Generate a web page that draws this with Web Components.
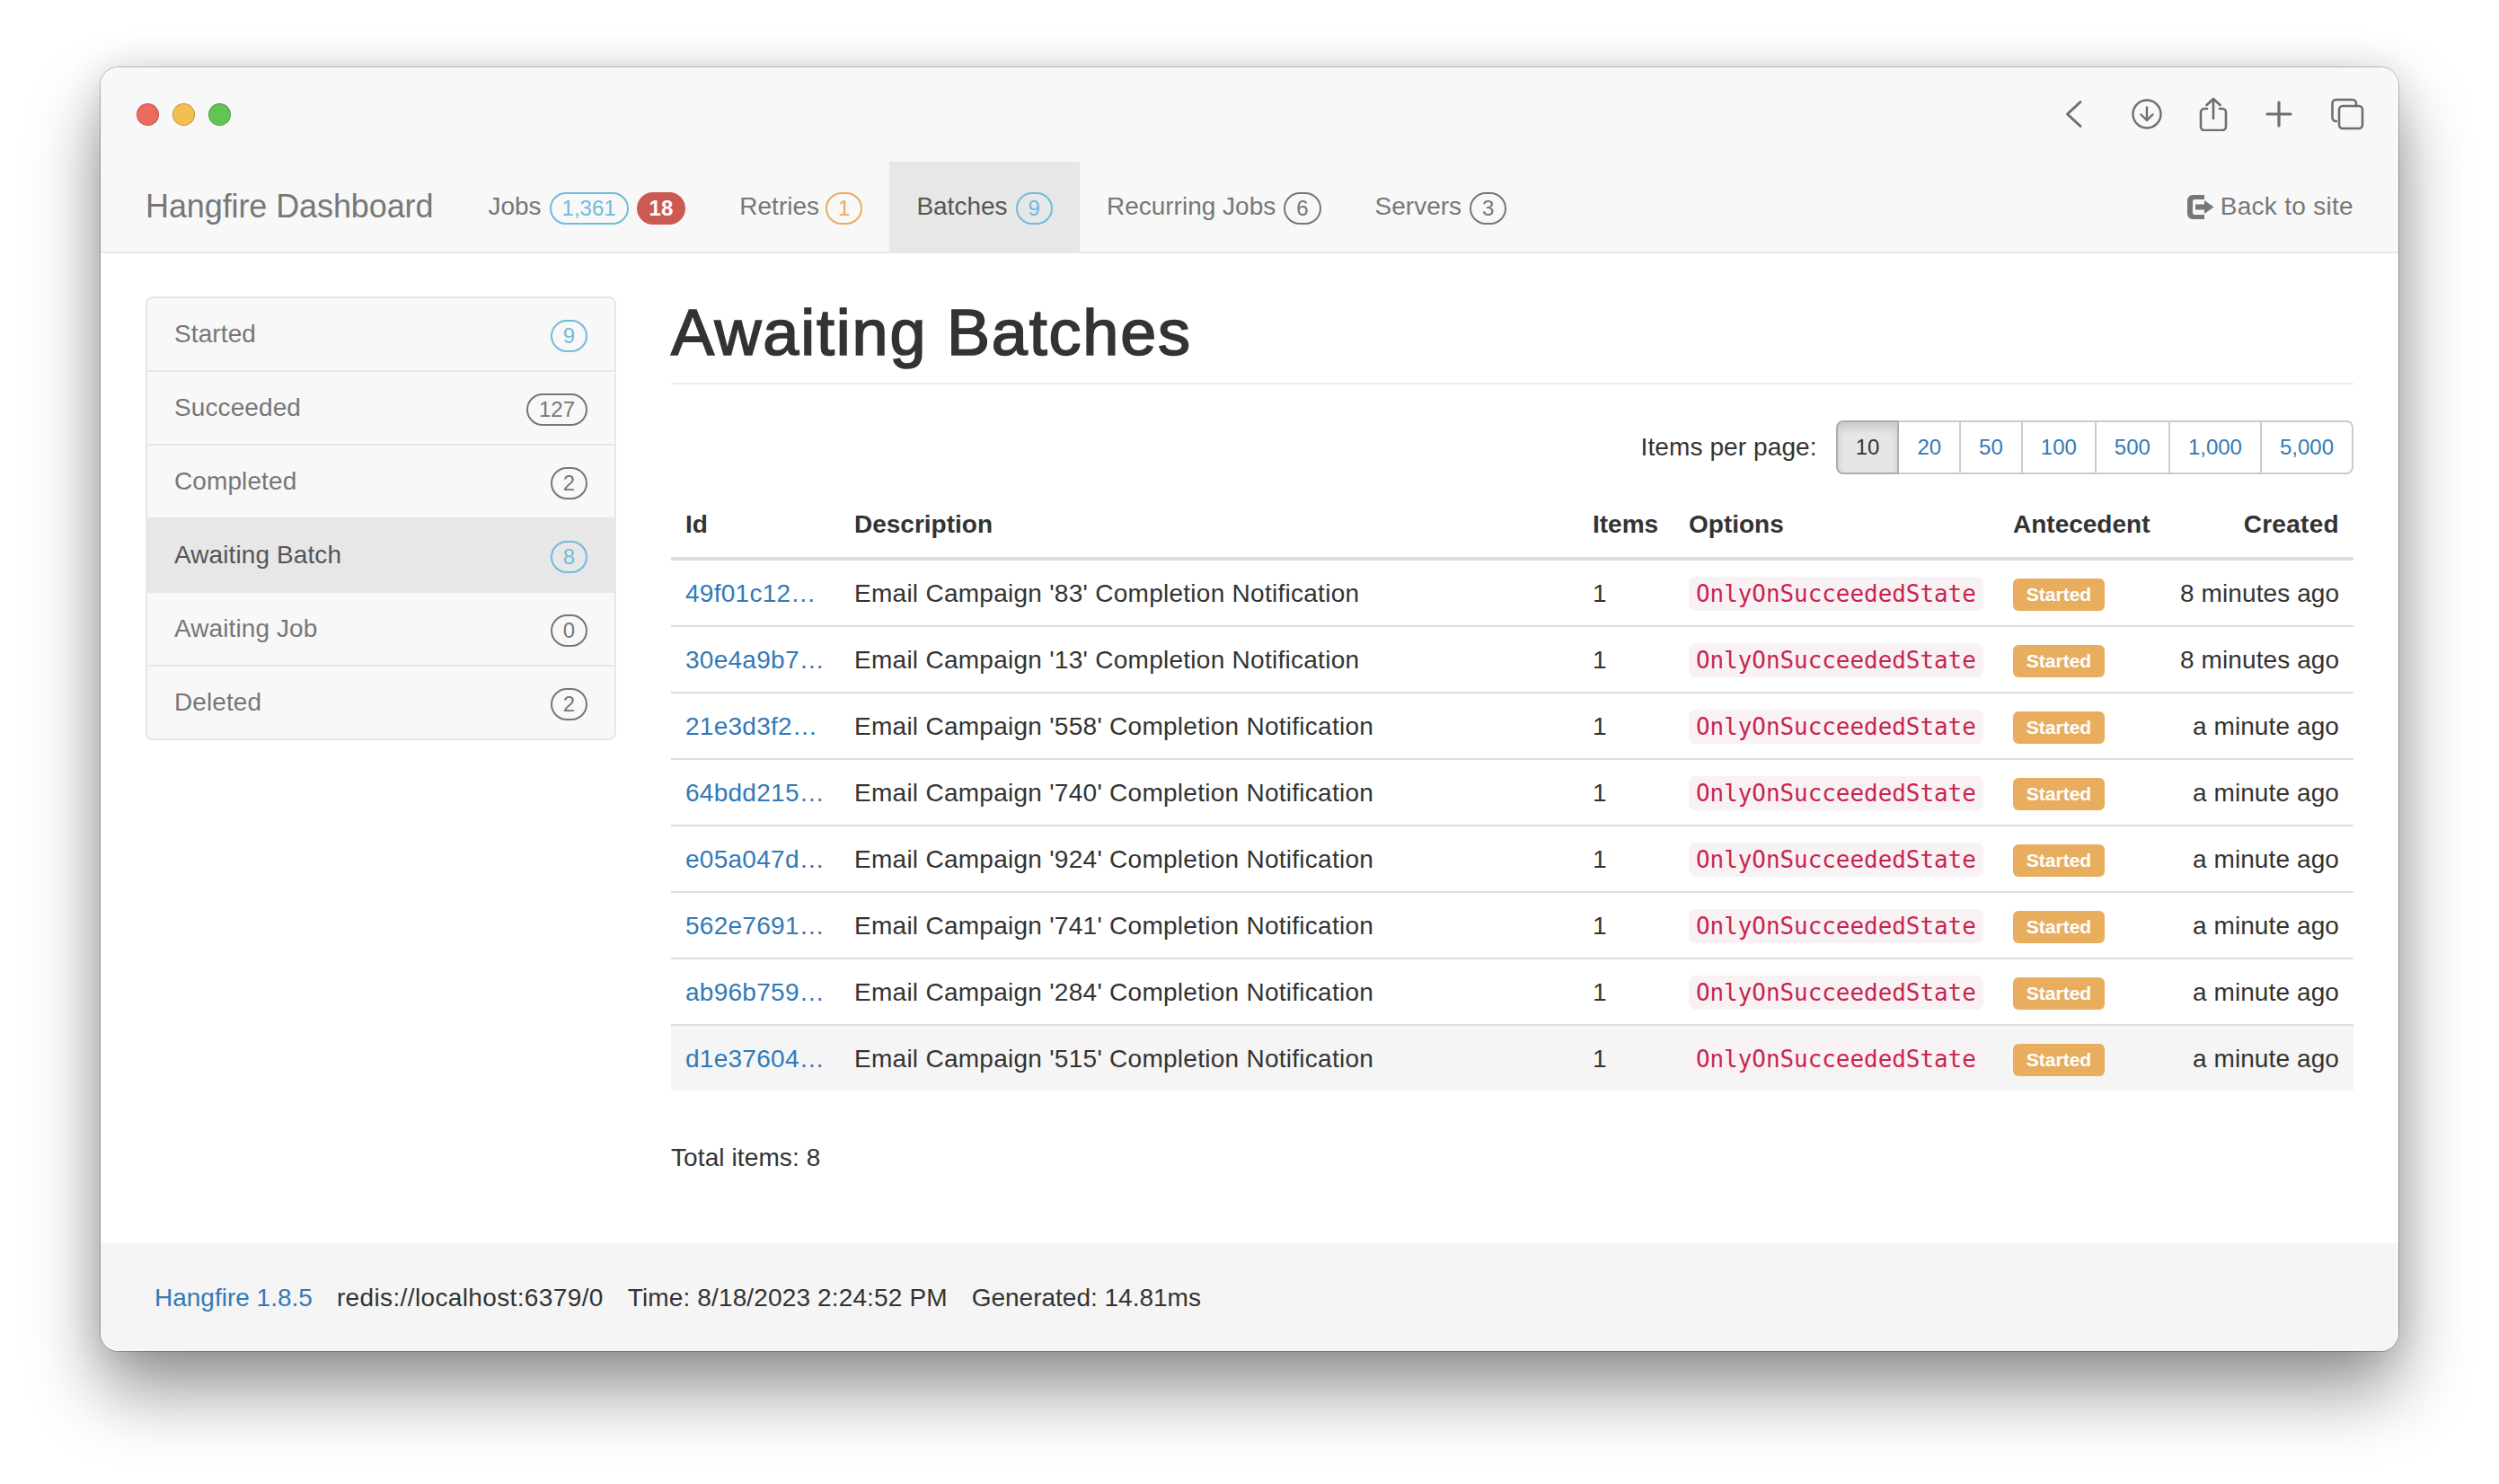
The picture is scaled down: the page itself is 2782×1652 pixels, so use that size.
<!DOCTYPE html>
<html>
<head>
<meta charset="utf-8">
<title>Hangfire Dashboard</title>
<style>
    html, body { margin: 0; background: #fff; }
    body {
        width: 2782px;
        height: 1652px;
        overflow: hidden;
        font-family: "Liberation Sans", Arial, sans-serif;
        font-size: 28px;
        line-height: 40px;
        color: #333;
    }
</style>
</head>
<body>
<hf-window>
    <hf-titlebar slot="title"></hf-titlebar>
    <hf-navbar slot="nav">
        <hf-nav-item>Jobs<hf-badge slot="badge" kind="info">1,361</hf-badge><hf-badge slot="badge" kind="danger">18</hf-badge></hf-nav-item>
        <hf-nav-item style="--label-gap:7px">Retries<hf-badge slot="badge" kind="warning">1</hf-badge></hf-nav-item>
        <hf-nav-item active>Batches<hf-badge slot="badge" kind="info">9</hf-badge></hf-nav-item>
        <hf-nav-item>Recurring Jobs<hf-badge slot="badge">6</hf-badge></hf-nav-item>
        <hf-nav-item>Servers<hf-badge slot="badge">3</hf-badge></hf-nav-item>
    </hf-navbar>
    <hf-sidebar slot="side">
        <hf-side-item>Started<hf-badge slot="badge" kind="info">9</hf-badge></hf-side-item>
        <hf-side-item>Succeeded<hf-badge slot="badge">127</hf-badge></hf-side-item>
        <hf-side-item>Completed<hf-badge slot="badge">2</hf-badge></hf-side-item>
        <hf-side-item active>Awaiting Batch<hf-badge slot="badge" kind="info">8</hf-badge></hf-side-item>
        <hf-side-item>Awaiting Job<hf-badge slot="badge">0</hf-badge></hf-side-item>
        <hf-side-item>Deleted<hf-badge slot="badge">2</hf-badge></hf-side-item>
    </hf-sidebar>
    <hf-page-header slot="main">Awaiting Batches</hf-page-header>
    <hf-page-size slot="main"></hf-page-size>
    <hf-batch-table slot="main"></hf-batch-table>
    <hf-total slot="main">Total items: 8</hf-total>
    <hf-footer slot="footer"></hf-footer>
</hf-window>

<script>
class HfWindow extends HTMLElement {
    constructor() {
        super();
        this.attachShadow({ mode: 'open' });
    }

    connectedCallback() {
        this.shadowRoot.innerHTML = `
        <style>
            :host {
                display: flex;
                flex-direction: column;
                box-sizing: border-box;
                width: 2558px;
                height: 1429px;
                margin: 75px 0 0 112px;
                background: #fff;
                border-radius: 20px;
                overflow: hidden;
                box-shadow: 0 0 0 1px rgba(0, 0, 0, 0.22), 0 44px 80px rgba(0, 0, 0, 0.42), 0 0 40px rgba(0, 0, 0, 0.12);
            }
            .content {
                flex: 1;
                display: grid;
                grid-template-columns: 524px 1873px;
                column-gap: 61px;
                align-items: start;
                padding: 48px 50px 0;
            }
        </style>
        <slot name="title"></slot>
        <slot name="nav"></slot>
        <div class="content">
            <div><slot name="side"></slot></div>
            <div><slot name="main"></slot></div>
        </div>
        <slot name="footer"></slot>
    `;
    }
}
customElements.define('hf-window', HfWindow);

class HfTitlebar extends HTMLElement {
    constructor() {
        super();
        this.attachShadow({ mode: 'open' });
    }

    connectedCallback() {
        this.shadowRoot.innerHTML = `
        <style>
            :host {
                display: flex;
                align-items: center;
                height: 105px;
                padding: 0 38px 0 40px;
                background: #f8f8f8;
            }
            .dot {
                box-sizing: border-box;
                width: 25px;
                height: 25px;
                margin-right: 15px;
                border-radius: 50%;
                border: 1px solid rgba(0, 0, 0, 0.22);
            }
            .tools {
                margin-left: auto;
                margin-top: -2px;
                display: flex;
                align-items: center;
            }
            svg {
                display: block;
                fill: none;
                stroke: #6e6e6e;
                stroke-linecap: round;
                stroke-linejoin: round;
            }
        </style>
        <div class="dot" style="background:#ed6a5e"></div>
        <div class="dot" style="background:#f5bf4f"></div>
        <div class="dot" style="background:#61c554"></div>
        <div class="tools">
            <svg width="20" height="32" viewBox="0 0 20 32" stroke-width="3"><path d="M17 2.5 2.500 16 17 29.500"/></svg>
            <svg width="36" height="36" viewBox="0 0 36 36" stroke-width="2.400" style="margin-left:53px"><circle cx="18" cy="18" r="15.500"/><path d="M18 10.500V25M11.500 18.500 18 25l6.500-6.500"/></svg>
            <svg width="32" height="38" viewBox="0 0 32 38" stroke-width="2.600" style="margin-left:40px"><path d="M9 13H6a4 4 0 0 0-4 4v16a4 4 0 0 0 4 4h20a4 4 0 0 0 4-4V17a4 4 0 0 0-4-4h-3M16 24V2M8.500 9 16 2l7.500 7"/></svg>
            <svg width="30" height="30" viewBox="0 0 30 30" stroke-width="3.200" style="margin-left:42px"><path d="M15 2v26M2 15h26"/></svg>
            <svg width="37" height="36" viewBox="0 0 37 36" stroke-width="2.600" style="margin-left:43px"><rect x="9" y="9" width="26" height="25" rx="4"/><path d="M6 26a4 4 0 0 1-4.500-4V6a4 4 0 0 1 4-4H24a4 4 0 0 1 4 4v3"/></svg>
        </div>
    `;
    }
}
customElements.define('hf-titlebar', HfTitlebar);

class HfNavbar extends HTMLElement {
    constructor() {
        super();
        this.attachShadow({ mode: 'open' });
    }

    connectedCallback() {
        this.shadowRoot.innerHTML = `
        <style>
            :host {
                display: flex;
                height: 100px;
                padding: 0 50px;
                background: #f8f8f8;
                border-bottom: 2px solid #e7e7e7;
                color: #777;
            }
            .brand {
                font-size: 36px;
                line-height: 100px;
                margin-right: 31px;
                letter-spacing: -0.1px;
            }
            .back {
                margin-left: auto;
                display: flex;
                align-items: center;
                gap: 7px;
                letter-spacing: 0.3px;
            }
            svg { display: block; fill: #777; }
        </style>
        <div class="brand">Hangfire Dashboard</div>
        <slot></slot>
        <div class="back">
            <svg width="30" height="27" viewBox="0 0 30 27"><path d="M19 0H6a6 6 0 0 0-6 6v15a6 6 0 0 0 6 6h13v-5H8a2 2 0 0 1-2-2V7a2 2 0 0 1 2-2h11z"/><path d="M9 10.500h10V6l10.500 7.500L19 21v-4.500H9z"/></svg>
            <span>Back to site</span>
        </div>
    `;
    }
}
customElements.define('hf-navbar', HfNavbar);

class HfNavItem extends HTMLElement {
    constructor() {
        super();
        this.attachShadow({ mode: 'open' });
    }

    connectedCallback() {
        this.shadowRoot.innerHTML = `
        <style>
            :host {
                display: flex;
                align-items: center;
                gap: var(--label-gap, 9px);
                padding: 0 30px;
                white-space: nowrap;
                color: #777;
            }
            :host([active]) {
                background: #e7e7e7;
                color: #555;
            }
            .badges { display: flex; gap: 9px; }
        </style>
        <span><slot></slot></span>
        <div class="badges"><slot name="badge"></slot></div>
    `;
    }
}
customElements.define('hf-nav-item', HfNavItem);

class HfBadge extends HTMLElement {
    constructor() {
        super();
        this.attachShadow({ mode: 'open' });
    }

    connectedCallback() {
        this.shadowRoot.innerHTML = `
        <style>
            :host {
                display: block;
                box-sizing: border-box;
                height: 36px;
                margin-top: 4px;
                padding: 0 12px;
                border: 2px solid #777;
                border-radius: 20px;
                font-size: 24px;
                line-height: 32px;
                color: #777;
                white-space: nowrap;
            }
            :host([kind="info"]) { border-color: #6fbcdc; color: #6fbcdc; }
            :host([kind="warning"]) { border-color: #e9ad5c; color: #e9ad5c; }
            :host([kind="danger"]) {
                background: #cb5a52;
                border-color: #cb5a52;
                color: #fff;
                font-weight: bold;
            }
        </style>
        <slot></slot>
    `;
    }
}
customElements.define('hf-badge', HfBadge);

class HfSidebar extends HTMLElement {
    constructor() {
        super();
        this.attachShadow({ mode: 'open' });
    }

    connectedCallback() {
        this.shadowRoot.innerHTML = `
        <style>
            :host {
                display: block;
                background: #f8f8f8;
                border: 2px solid #e7e7e7;
                border-radius: 8px;
                overflow: hidden;
            }
            ::slotted(hf-side-item:not(:first-child)) { border-top: 2px solid #e7e7e7; }
        </style>
        <slot></slot>
    `;
    }
}
customElements.define('hf-sidebar', HfSidebar);

class HfSideItem extends HTMLElement {
    constructor() {
        super();
        this.attachShadow({ mode: 'open' });
    }

    connectedCallback() {
        this.shadowRoot.innerHTML = `
        <style>
            :host {
                display: flex;
                align-items: center;
                justify-content: space-between;
                height: 80px;
                padding: 0 30px;
                color: #777;
            }
            :host([active]) {
                background: #e7e7e7;
                color: #555;
            }
            span { letter-spacing: 0.1px; }
        </style>
        <span><slot></slot></span>
        <slot name="badge"></slot>
    `;
    }
}
customElements.define('hf-side-item', HfSideItem);

class HfPageHeader extends HTMLElement {
    constructor() {
        super();
        this.attachShadow({ mode: 'open' });
    }

    connectedCallback() {
        this.shadowRoot.innerHTML = `
        <style>
            :host {
                display: block;
                font-size: 72px;
                line-height: 79px;
                padding: 1px 0 16px;
                border-bottom: 2px solid #eee;
                color: #333;
                letter-spacing: 1.800px;
                -webkit-text-stroke: 1.700px #333;
            }
        </style>
        <slot></slot>
    `;
    }
}
customElements.define('hf-page-header', HfPageHeader);

class HfPageSize extends HTMLElement {
    constructor() {
        super();
        this.attachShadow({ mode: 'open' });
    }

    connectedCallback() {
        const sizes = ['10', '20', '50', '100', '500', '1,000', '5,000'];
        this.shadowRoot.innerHTML = `
        <style>
            :host {
                display: flex;
                justify-content: flex-end;
                align-items: center;
                margin-top: 40px;
                height: 60px;
            }
            .label { margin-right: 21px; letter-spacing: 0.1px; }
            .group { display: flex; }
            a {
                box-sizing: border-box;
                height: 60px;
                padding: 0 20px;
                margin-left: -2px;
                border: 2px solid #ccc;
                background: #fff;
                font-size: 24px;
                line-height: 56px;
                color: #337ab7;
            }
            a:first-child {
                margin-left: 0;
                border-radius: 8px 0 0 8px;
                background: #e6e6e6;
                border-color: #adadad;
                color: #333;
                box-shadow: inset 0 6px 10px rgba(0, 0, 0, 0.125);
                position: relative;
                z-index: 1;
            }
            a:last-child { border-radius: 0 8px 8px 0; }
        </style>
        <span class="label">Items per page:</span>
        <div class="group">${sizes.map(s => `<a>${s}</a>`).join('')}</div>
    `;
    }
}
customElements.define('hf-page-size', HfPageSize);

class HfBatchTable extends HTMLElement {
    constructor() {
        super();
        this.attachShadow({ mode: 'open' });
    }

    connectedCallback() {
        const rows = [
            ['49f01c12…', '83', '8 minutes ago'],
            ['30e4a9b7…', '13', '8 minutes ago'],
            ['21e3d3f2…', '558', 'a minute ago'],
            ['64bdd215…', '740', 'a minute ago'],
            ['e05a047d…', '924', 'a minute ago'],
            ['562e7691…', '741', 'a minute ago'],
            ['ab96b759…', '284', 'a minute ago'],
            ['d1e37604…', '515', 'a minute ago'],
        ];
        this.shadowRoot.innerHTML = `
        <style>
            :host { display: block; margin-top: 20px; }
            table {
                width: 1873px;
                table-layout: fixed;
                border-collapse: separate;
                border-spacing: 0;
            }
            th, td {
                padding: 0 16px;
                text-align: left;
                white-space: nowrap;
                vertical-align: middle;
            }
            th {
                height: 72px;
                border-bottom: 4px solid #ddd;
            }
            td {
                height: 70px;
                padding-top: 2px;
                letter-spacing: 0.270px;
            }
            tr + tr td { border-top: 2px solid #ddd; }
            tbody tr:last-child td { background: #f5f5f5; }
            td.right { text-align: right; letter-spacing: 0.1px; }
            th.right { text-align: right; letter-spacing: 0.3px; }
            a { color: #337ab7; }
            code {
                display: inline-block;
                height: 38px;
                margin-top: -4px;
                padding: 0 8px;
                border-radius: 8px;
                background: #f9f2f4;
                color: #c7254e;
                font-family: "DejaVu Sans Mono", monospace;
                font-size: 25.900px;
                line-height: 38px;
                letter-spacing: 0;
                vertical-align: middle;
            }
            .label {
                display: inline-block;
                height: 36px;
                width: 102px;
                margin-top: -2px;
                border-radius: 6px;
                background: #e8ae5e;
                color: #fff;
                font-size: 21px;
                font-weight: bold;
                line-height: 36px;
                letter-spacing: 0;
                text-align: center;
                vertical-align: middle;
            }
        </style>
        <table>
            <colgroup>
                <col style="width:188px"><col style="width:822px"><col style="width:107px"><col style="width:361px"><col style="width:186px"><col>
            </colgroup>
            <thead>
                <tr><th>Id</th><th>Description</th><th>Items</th><th>Options</th><th>Antecedent</th><th class="right">Created</th></tr>
            </thead>
            <tbody>
                ${rows.map(r => `<tr>
                    <td><a>${r[0]}</a></td>
                    <td>Email Campaign '${r[1]}' Completion Notification</td>
                    <td>1</td>
                    <td><code>OnlyOnSucceededState</code></td>
                    <td><span class="label">Started</span></td>
                    <td class="right">${r[2]}</td>
                </tr>`).join('')}
            </tbody>
        </table>
    `;
    }
}
customElements.define('hf-batch-table', HfBatchTable);

class HfTotal extends HTMLElement {
    constructor() {
        super();
        this.attachShadow({ mode: 'open' });
    }

    connectedCallback() {
        this.shadowRoot.innerHTML = `
        <style>
            :host { display: block; margin-top: 55px; letter-spacing: 0.1px; }
        </style>
        <slot></slot>
    `;
    }
}
customElements.define('hf-total', HfTotal);

class HfFooter extends HTMLElement {
    constructor() {
        super();
        this.attachShadow({ mode: 'open' });
    }

    connectedCallback() {
        this.shadowRoot.innerHTML = `
        <style>
            :host {
                display: flex;
                align-items: center;
                gap: 27px;
                height: 120px;
                padding: 1px 60px 0;
                box-sizing: border-box;
                background: #f5f5f5;
            }
            a { color: #337ab7; }
            .redis { letter-spacing: 0.370px; }
            .time { letter-spacing: 0.140px; }
        </style>
        <a>Hangfire 1.8.5</a>
        <span class="redis">redis://localhost:6379/0</span>
        <span class="time">Time: 8/18/2023 2:24:52 PM</span>
        <span>Generated: 14.81ms</span>
    `;
    }
}
customElements.define('hf-footer', HfFooter);
</script>
</body>
</html>
